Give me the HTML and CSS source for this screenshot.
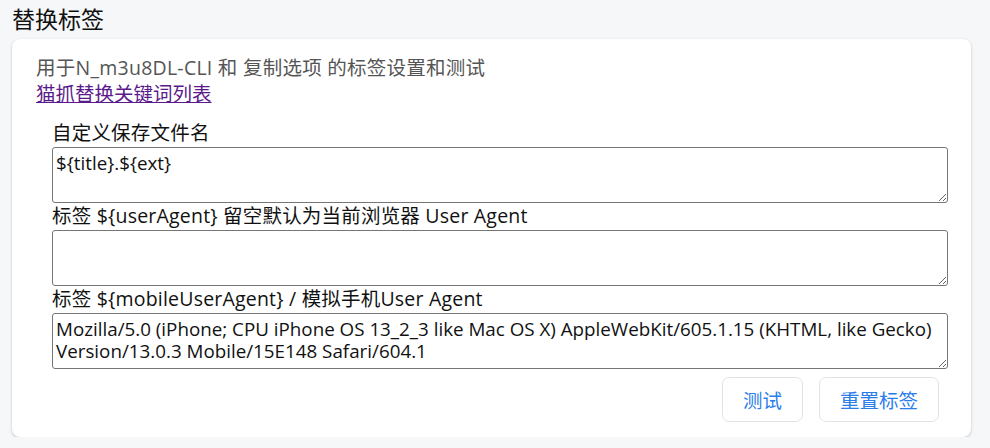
FILE: index.html
```html
<!DOCTYPE html>
<html lang="zh-CN">
<head>
<meta charset="utf-8">
<title>替换标签</title>
<link rel="stylesheet" href="styles.css">
</head>
<body>
<h2 class="section-title">替换标签</h2>
<div class="card">
  <p class="desc">用于N_m3u8DL-CLI 和 复制选项 的标签设置和测试</p>
  <a class="link" href="#">猫抓替换关键词列表</a>
  <div class="form">
    <div class="field">
      <label class="label">自定义保存文件名</label>
      <textarea class="input">${title}.${ext}</textarea>
    </div>
    <div class="field">
      <label class="label">标签 ${userAgent} 留空默认为当前浏览器 User Agent</label>
      <textarea class="input"></textarea>
    </div>
    <div class="field">
      <label class="label">标签 ${mobileUserAgent} / 模拟手机User Agent</label>
      <textarea class="input">Mozilla/5.0 (iPhone; CPU iPhone OS 13_2_3 like Mac OS X) AppleWebKit/605.1.15 (KHTML, like Gecko) Version/13.0.3 Mobile/15E148 Safari/604.1</textarea>
    </div>
    <div class="actions">
      <button class="btn btn-test">测试</button>
      <button class="btn btn-reset">重置标签</button>
    </div>
  </div>
</div>
</body>
</html>
```
FILE: styles.css
```css
html, body {
  margin: 0;
  padding: 0;
  background: #f6f7f9;
}
body {
  font-family: "Open Sans", "Noto Sans CJK SC", sans-serif;
  color: #111;
  padding: 0 19px 0 12px;
}
.section-title {
  margin: 0;
  padding-top: 4px;
  height: 35px;
  font-size: 23px;
  font-weight: 400;
  line-height: 30px;
  color: #111;
}
.card {
  background: #fff;
  border-radius: 8px;
  box-shadow: 0 1px 3px rgba(0,0,0,0.22);
  padding: 16px 24px 15px 24px;
}
.desc {
  margin: 0;
  font-size: 19.5px;
  line-height: 26px;
  letter-spacing: 0.25px;
  color: #555;
}
.link {
  display: inline-block;
  font-size: 19.5px;
  line-height: 26px;
  color: #5b1a8c;
  text-decoration: underline;
}
.form {
  margin-top: 13px;
  padding-left: 16px;
}
.field {
  display: flex;
  flex-direction: column;
}
.label {
  font-size: 19.5px;
  line-height: 25px;
  letter-spacing: 0.2px;
  color: #111;
  margin-bottom: 2px;
}
.input {
  box-sizing: border-box;
  width: 896px;
  height: 56px;
  margin: 0;
  padding: 4px 3px;
  border: 1px solid #767676;
  border-radius: 3px;
  font-family: "Open Sans", "Noto Sans CJK SC", sans-serif;
  font-size: 18.8px;
  line-height: 22px;
  color: #111;
  resize: vertical;
}
.actions {
  display: flex;
  justify-content: flex-end;
  gap: 16px;
  margin-top: 8px;
  padding-right: 8px;
}
.btn {
  height: 45px;
  padding: 0 20px;
  background: #fff;
  border: 1px solid #e3e3e3;
  border-radius: 7px;
  font-family: "Open Sans", "Noto Sans CJK SC", sans-serif;
  font-size: 19.5px;
  color: #2b7de9;
}
```
